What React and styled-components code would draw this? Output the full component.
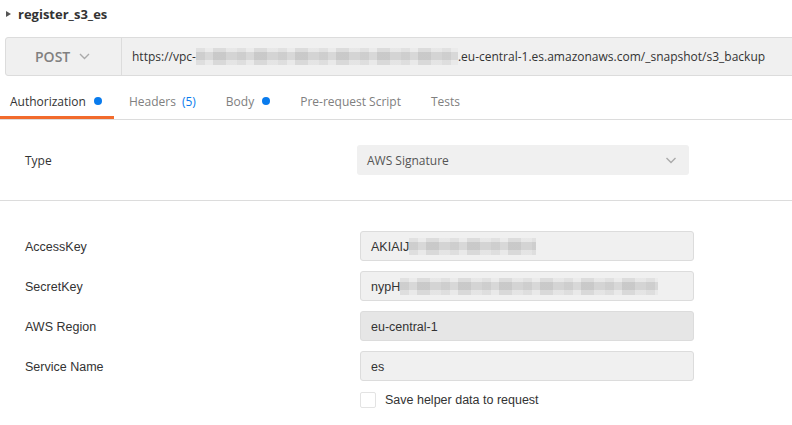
import styled, { createGlobalStyle } from 'styled-components';

const Global = createGlobalStyle`
    html, body {
        margin: 0;
        padding: 0;
        background: #fff;
        font-family: "Open Sans", "Liberation Sans", sans-serif;
        color: #333;
        overflow: hidden;
    }
`

const Page = styled.div`
    width: 792px;
    height: 425px;
    overflow: hidden;
`

const Header = styled.div`
    height: 27px;
    display: flex;
    align-items: center;
    padding-left: 6px;
    gap: 7px;
`

const Caret = styled.span`
    width: 0;
    height: 0;
    border-top: 3.5px solid transparent;
    border-bottom: 3.5px solid transparent;
    border-left: 5px solid #555;
`

const Title = styled.h1`
    margin: 0;
    font-size: 13px;
    font-weight: 700;
    color: #333;
`

const UrlBar = styled.div`
    margin: 10px -20px 0 5px;
    height: 39px;
    box-sizing: border-box;
    display: flex;
    background: #f0f0f0;
    border: 1px solid #dcdcdc;
    border-radius: 3px;
`

const Method = styled.div`
    width: 116px;
    flex-shrink: 0;
    box-sizing: border-box;
    display: flex;
    align-items: center;
    padding-left: 29px;
    gap: 9px;
    border-right: 1px solid #dcdcdc;
    font-size: 14px;
    font-weight: 600;
    color: #808080;
`

const Url = styled.div`
    flex: 1;
    display: flex;
    align-items: center;
    padding-left: 10px;
    font-size: 12px;
    color: #333;
    white-space: nowrap;
`

const Blur = styled.span`
    display: inline-block;
    width: ${p => p.w}px;
    height: ${p => p.h || 17}px;
    background:
        repeating-linear-gradient(90deg, rgba(0,0,0,0.05) 0 9px, rgba(0,0,0,0) 9px 17px, rgba(0,0,0,0.08) 17px 30px, rgba(0,0,0,0.02) 30px 41px),
        linear-gradient(180deg, #ebebeb 0 25%, #d4d4d4 25% 70%, #e8e8e8 70%);
    opacity: 0.85;
`

const Tabs = styled.div`
    margin-top: 7px;
    height: 36px;
    display: flex;
    border-bottom: 1px solid #dcdcdc;
`

const Tab = styled.div`
    box-sizing: border-box;
    height: 36px;
    padding: 3px 15px 0;
    display: flex;
    align-items: center;
    gap: 8px;
    font-size: 12px;
    color: ${p => (p.active ? '#333' : '#808080')};
    border-bottom: 3px solid ${p => (p.active ? '#f26b2c' : 'transparent')};
    &:first-child {
        padding-left: 10px;
        padding-right: 12px;
    }
`

const Dot = styled.span`
    width: 8px;
    height: 8px;
    border-radius: 50%;
    background: #097bed;
`

const Count = styled.span`
    color: #097bed;
    margin-left: -2px;
`

const TypeSection = styled.div`
    padding: 25px 0 25px 25px;
    border-bottom: 1px solid #dcdcdc;
    display: grid;
    grid-template-columns: 332px 332px;
    align-items: center;
`

const Label = styled.label`
    font-size: ${p => (p.sans ? '12.5px' : '12px')};
    font-family: ${p => (p.sans ? '"Liberation Sans", Arial, sans-serif' : 'inherit')};
    color: #333;
    padding-top: ${p => (p.sans ? '1px' : '0')};
`

const Select = styled.div`
    height: 30px;
    box-sizing: border-box;
    display: flex;
    align-items: center;
    justify-content: space-between;
    padding: 0 12px 0 10px;
    background: #f0f0f0;
    border-radius: 3px;
    font-size: 12px;
    color: #555;
`

const Fields = styled.div`
    padding: 30px 0 0 25px;
    display: grid;
    grid-template-columns: 335px 334px;
    row-gap: 10px;
    align-items: center;
`

const Input = styled.div`
    height: 30px;
    box-sizing: border-box;
    display: flex;
    align-items: center;
    padding: 1px 10px 0;
    background: ${p => (p.disabled ? '#e6e6e6' : '#f0f0f0')};
    border: 1px solid #dcdcdc;
    border-radius: 3px;
    font-family: "Liberation Sans", Arial, sans-serif;
    font-size: 12.5px;
    color: #333;
    white-space: nowrap;
`

const CheckRow = styled.div`
    grid-column: 2;
    display: flex;
    align-items: center;
    gap: 9px;
    padding-top: 1px;
    font-family: "Liberation Sans", Arial, sans-serif;
    font-size: 12.5px;
    color: #333;
`

const Box = styled.span`
    width: 16px;
    height: 16px;
    box-sizing: border-box;
    border: 1px solid #e3e3e3;
    border-radius: 2px;
    background: #fff;
`

const Chevron = ({ color = '#999', w = 11 }) => (
    <svg width={w} height="7" viewBox="0 0 11 7">
        <polyline points="1,1 5.5,5.5 10,1" fill="none" stroke={color} strokeWidth="1.4" />
    </svg>
)

const fields = [
    { label: 'AccessKey', value: 'AKIAIJ', blur: 127 },
    { label: 'SecretKey', value: 'nypH', blur: 258 },
    { label: 'AWS Region', value: 'eu-central-1', disabled: true },
    { label: 'Service Name', value: 'es' },
]

const App = () => {
    return (
        <Page>
            <Global />
            <Header>
                <Caret />
                <Title>register_s3_es</Title>
            </Header>
            <UrlBar>
                <Method>
                    POST
                    <Chevron color="#aaa" />
                </Method>
                <Url>
                    https://vpc-<Blur w={262} />.eu-central-1.es.amazonaws.com/_snapshot/s3_backup
                </Url>
            </UrlBar>
            <Tabs>
                <Tab active>Authorization <Dot /></Tab>
                <Tab>Headers <Count>(5)</Count></Tab>
                <Tab>Body <Dot /></Tab>
                <Tab>Pre-request Script</Tab>
                <Tab>Tests</Tab>
            </Tabs>
            <TypeSection>
                <Label>Type</Label>
                <Select>
                    AWS Signature
                    <Chevron color="#aaa" w={12} />
                </Select>
            </TypeSection>
            <Fields>
                {fields.map(f => (
                    <>
                        <Label sans key={f.label}>{f.label}</Label>
                        <Input disabled={f.disabled}>
                            {f.value}
                            {f.blur && <Blur w={f.blur} />}
                        </Input>
                    </>
                ))}
                <CheckRow>
                    <Box />
                    Save helper data to request
                </CheckRow>
            </Fields>
        </Page>
    )
}

export default App
